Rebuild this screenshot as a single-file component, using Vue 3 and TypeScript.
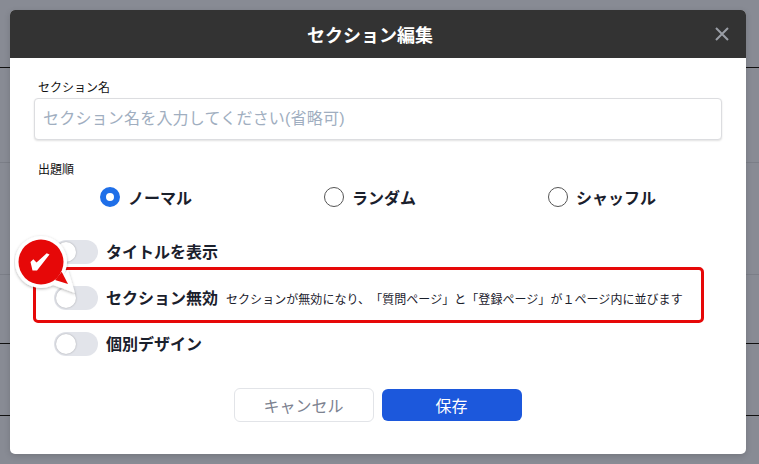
<template>
  <div class="page">
    <!-- 背後のページの罫線 -->
    <div class="bg-line dark" style="top: 67px"></div>
    <div class="bg-line" style="top: 162px"></div>
    <div class="bg-line" style="top: 274px"></div>
    <div class="bg-line dark" style="top: 343px"></div>
    <div class="bg-line dark" style="top: 415px"></div>

    <div class="modal">
      <header class="modal-header">
        <h1>セクション編集</h1>
        <svg class="close" width="14" height="14" viewBox="0 0 14 14">
          <path d="M1 1L13 13M13 1L1 13" stroke="#9a9ea6" stroke-width="2" fill="none" />
        </svg>
      </header>

      <div class="modal-body">
        <label class="field-label">セクション名</label>
        <input v-model="sectionName" class="name-input" type="text" placeholder="セクション名を入力してください(省略可)" />

        <label class="field-label order-label">出題順</label>
        <div class="radio-row">
          <label v-for="opt in orderOptions" :key="opt" class="radio" @click="order = opt">
            <span class="radio-dot" :class="{ active: order === opt }"></span>
            <span>{{ opt }}</span>
          </label>
        </div>

        <div class="switches">
          <div v-for="item in switches" :key="item.label" class="switch-row">
            <span class="switch"><span class="knob"></span></span>
            <span class="switch-label">{{ item.label }}</span>
            <span v-if="item.note" class="switch-note">{{ item.note }}</span>
          </div>
          <div class="highlight"></div>
        </div>

        <div class="actions">
          <button class="btn cancel">キャンセル</button>
          <button class="btn save">保存</button>
        </div>
      </div>

      <!-- 吹き出しのチェックマーク -->
      <svg class="callout" width="66" height="64" viewBox="0 0 66 64">
        <defs>
          <filter id="callout-shadow" x="-20%" y="-20%" width="140%" height="140%">
            <feDropShadow dx="0" dy="1" stdDeviation="1.5" flood-color="#000" flood-opacity="0.3" />
          </filter>
        </defs>
        <g filter="url(#callout-shadow)">
          <circle cx="27" cy="28" r="26" fill="#fff" />
          <polygon points="54,36 61,59 39,51" fill="#fff" />
        </g>
        <circle cx="27" cy="28" r="22.5" fill="#e60808" />
        <polygon points="47.7,37.7 54,50 41,46" fill="#e60808" />
        <polygon points="19.3,25.3 22.5,28.5 32.7,19.3 35.5,20.5 23,36.5 18.5,36.5 16.5,28" fill="#fff" />
      </svg>
    </div>
  </div>
</template>

<script setup lang="ts">
import { ref } from 'vue';

const sectionName = ref('');
const order = ref('ノーマル');
const orderOptions = ['ノーマル', 'ランダム', 'シャッフル'];

const switches = [
  { label: 'タイトルを表示' },
  { label: 'セクション無効', note: 'セクションが無効になり、「質問ページ」と「登録ページ」が１ページ内に並びます' },
  { label: '個別デザイン' }
];
</script>

<style>
html, body {
  margin: 0;
  padding: 0;
}
</style>

<style scoped>
.page {
  position: relative;
  width: 759px;
  height: 464px;
  overflow: hidden;
  background: #888b94;
  padding: 10px 13px 10px 10px;
  box-sizing: border-box;
  font-family: "Liberation Sans", "Noto Sans CJK JP", sans-serif;
  text-spacing-trim: space-all;
}

.bg-line {
  position: absolute;
  left: 0;
  right: 0;
  height: 1px;
  background: #7b7e87;
}

.bg-line.dark {
  background: #111;
}

.modal {
  position: relative;
  width: 736px;
  height: 444px;
  background: #fff;
  border-radius: 5px;
  box-shadow: 0 2px 6px rgba(0, 0, 0, 0.15);
}

.modal-header {
  height: 48px;
  background: #333;
  border-radius: 5px 5px 0 0;
  display: flex;
  align-items: center;
  justify-content: center;
  padding-right: 16px;
  box-sizing: border-box;
  position: relative;
}

.modal-header h1 {
  margin: 0;
  color: #fff;
  font-size: 18px;
  font-weight: 700;
}

.close {
  position: absolute;
  right: 17px;
  top: 17px;
}

.modal-body {
  padding: 21px 24px 0;
}

.field-label {
  display: block;
  margin-left: 4px;
  font-size: 12px;
  line-height: 18px;
  color: #111;
}

.name-input {
  display: block;
  width: 688px;
  height: 42px;
  margin-top: 1px;
  padding: 0 8px;
  box-sizing: border-box;
  border: 1px solid #dcdde0;
  border-radius: 4px;
  box-shadow: 0 1px 2px rgba(0, 0, 0, 0.12);
  font-family: inherit;
  font-size: 16px;
  letter-spacing: 0.2px;
  outline: none;
}

.name-input::placeholder {
  color: #a0aec0;
}

.order-label {
  margin-top: 21px;
}

.radio-row {
  display: flex;
  margin-top: 4px;
  padding-left: 66px;
  height: 28px;
  align-items: center;
}

.radio {
  flex: none;
  width: 224px;
  display: flex;
  align-items: center;
  gap: 8px;
  font-size: 16px;
  font-weight: 700;
  color: #1a202c;
  cursor: pointer;
}

.radio-dot {
  width: 20px;
  height: 20px;
  box-sizing: border-box;
  border: 1px solid #555;
  border-radius: 50%;
  background: #fff;
}

.radio-dot.active {
  border: 6px solid #1f6fe8;
}

.switches {
  position: relative;
  margin-top: 18px;
  padding-left: 20px;
}

.switch-row {
  display: flex;
  align-items: center;
  height: 46px;
}

.switch {
  width: 44px;
  height: 24px;
  border-radius: 12px;
  background: #e2e4ea;
  flex: none;
  padding: 2px 0 0 2px;
  box-sizing: border-box;
}

.knob {
  display: block;
  width: 20px;
  height: 20px;
  border-radius: 50%;
  background: #fff;
  box-shadow: 0 0 2px rgba(0, 0, 0, 0.3);
}

.switch-label {
  margin-left: 8px;
  padding-bottom: 2px;
  font-size: 16px;
  font-weight: 700;
  color: #1a202c;
}

.switch-note {
  margin-left: 8px;
  font-size: 12px;
  letter-spacing: 0.05px;
  color: #1a202c;
}

.highlight {
  position: absolute;
  left: -1px;
  top: 38px;
  width: 671px;
  height: 56px;
  border: 3px solid #e60808;
  border-radius: 5px;
  box-sizing: border-box;
  pointer-events: none;
}

.actions {
  display: flex;
  justify-content: center;
  gap: 8px;
  margin-top: 21px;
  padding-right: 1px;
}

.btn {
  width: 140px;
  height: 34px;
  border-radius: 6px;
  box-sizing: border-box;
  font-family: inherit;
  font-size: 16px;
  cursor: pointer;
}

.cancel {
  background: #fff;
  border: 1px solid #e2e4e8;
  color: #7c8290;
}

.save {
  background: #1c58dc;
  border: none;
  color: #fff;
  height: 32px;
  margin-top: 1px;
}

.callout {
  position: absolute;
  left: 4px;
  top: 224px;
}
</style>
